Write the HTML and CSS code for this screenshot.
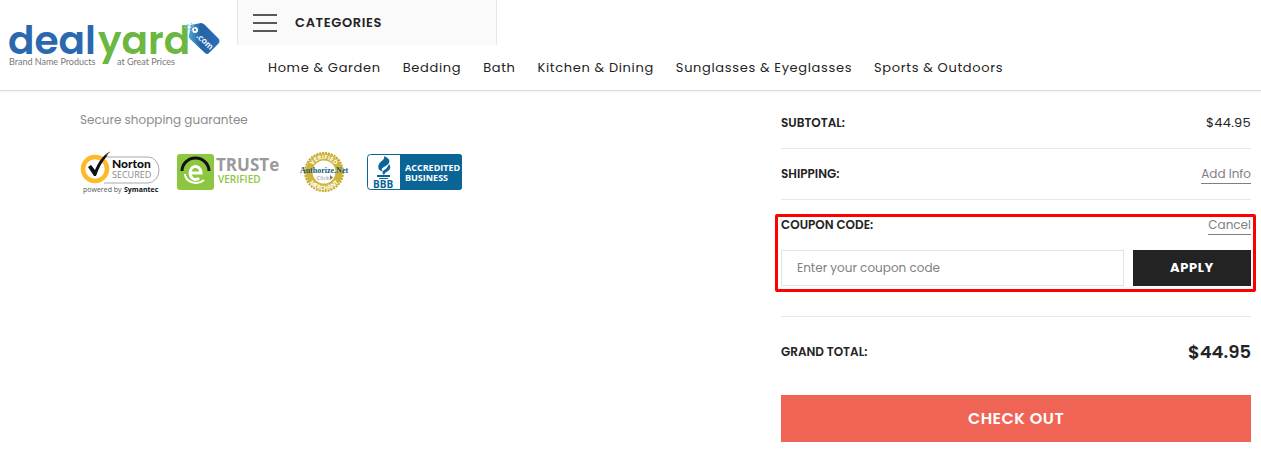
FILE: index.html
```html
<!DOCTYPE html>
<html lang="en">

<head>
    <meta charset="UTF-8" />
    <meta name="viewport" content="width=device-width, initial-scale=1.0" />
    <title>Dealyard - Cart</title>
    <link rel="stylesheet" href="styles.css">
</head>

<body>

    <header class="header">
        <a href="#" class="logo" aria-label="Dealyard home">
            <svg width="222" height="60" viewBox="0 0 222 60">
                <g font-family="Poppins, Lato, sans-serif" font-size="39" font-weight="600">
                    <text x="8" y="43" fill="#2a69b0">deal</text>
                    <text x="98" y="43" fill="#6bb742">yard</text>
                </g>
                <g font-family="Lato, sans-serif" font-size="9" fill="#777">
                    <text x="9" y="54">Brand Name Products</text>
                    <text x="117" y="54">at Great Prices</text>
                </g>
                <defs>
                    <linearGradient id="tag" x1="0" x2="1">
                        <stop offset="0" stop-color="#4aa3cf" />
                        <stop offset=".4" stop-color="#2463a5" />
                        <stop offset="1" stop-color="#2b6ebd" />
                    </linearGradient>
                </defs>
                <path d="M191 14l10-2q2 0 4 2l14 14q1 2 0 4l-10 10q-2 2-4 0l-15-14q-2-2-1-4z" fill="url(#tag)" />
                <circle cx="195" cy="19" r="3" fill="#fff" />
                <circle cx="195" cy="19" r="1" fill="#2463a5" />
                <path d="M195 18l-4-6M193 20l-9-4M192 17q-3-5-7-2" fill="none" stroke="#7cc4e3" stroke-width="1" />
                <text x="196" y="26" transform="rotate(43 196 26)" font-family="Lato, sans-serif" font-size="9" font-weight="700" fill="#fff">.com</text>
            </svg>
        </a>
        <div class="header-main">
            <button class="categories" type="button">
                <svg width="24" height="18" viewBox="0 0 24 18" stroke="#232323" stroke-width="1.6">
                    <path d="M0 1h24M0 9h24M0 17h24" />
                </svg>
                Categories
            </button>
            <nav class="menu">
                <a href="#">Home &amp; Garden</a>
                <a href="#">Bedding</a>
                <a href="#">Bath</a>
                <a href="#">Kitchen &amp; Dining</a>
                <a href="#">Sunglasses &amp; Eyeglasses</a>
                <a href="#">Sports &amp; Outdoors</a>
            </nav>
        </div>
    </header>

    <main class="cart">
        <section class="secure">
            <p>Secure shopping guarantee</p>
            <div class="badges">
                <!-- Norton -->
                <svg width="80" height="44" viewBox="0 0 80 44">
                    <path d="M24 6h44a11 13 0 0 1 0 26H24" fill="#fff" stroke="#aaa" />
                    <circle cx="15" cy="18" r="12" fill="#fff" stroke="#fdb927" stroke-width="4.5" />
                    <path d="M8 16l3-2 4 5q4-10 11-16l3-2-2 4q-7 8-11 20h-2z" fill="#111" />
                    <path d="M26 4l2-1M28 2l2-1" stroke="#a08040" />
                    <text x="32" y="17" font-family="Lato, sans-serif" font-size="12" font-weight="900" fill="#111">Norton</text>
                    <g font-family="'Open Sans', sans-serif">
                        <text x="32" y="27" font-size="9" fill="#888">SECURED</text>
                        <text x="3" y="41" font-size="7" fill="#555">powered by</text>
                        <text x="44" y="41" font-size="7" font-weight="700" fill="#111">Symantec</text>
                    </g>
                </svg>
                <!-- TRUSTe -->
                <svg width="105" height="44" viewBox="0 0 105 44">
                    <rect y="3" width="37" height="36" rx="3" fill="#8dc63f" />
                    <path d="M5 20a13.500 13 0 0 1 27 0" fill="none" stroke="#111" stroke-width="3" />
                    <path d="M13 22h11a5.500 6.500 0 1 0-2 5" fill="none" stroke="#fff" stroke-width="3" />
                    <path d="M8 23a11 9 0 0 0 19 6" fill="none" stroke="#fff" stroke-width="2" />
                    <g font-family="'Open Sans', sans-serif">
                        <text x="39" y="20" font-size="17" font-weight="700" fill="#9a9a9a">TRUSTe</text>
                        <text x="41" y="32" font-size="10" font-weight="600" fill="#8dc63f">VERIFIED</text>
                    </g>
                </svg>
                <!-- Authorize.Net -->
                <svg width="51" height="44" viewBox="0 0 51 44">
                    <defs>
                        <path id="arcTop" d="M12 21a13 13 0 0 1 26 0" />
                        <path id="arcBottom" d="M7 21a18 18 0 0 0 36 0" />
                    </defs>
                    <circle cx="25" cy="21" r="19" fill="none" stroke="#c2a522" stroke-width="2" stroke-dasharray="2 1" />
                    <circle cx="25" cy="21" r="15" fill="#fff" stroke="#cfb53b" stroke-width="7" />
                    <g font-family="'Open Sans', sans-serif" font-size="6" font-weight="700" fill="#fff" text-anchor="middle">
                        <text><textPath href="#arcTop" startOffset="50%">VERIFIED</textPath></text>
                        <text><textPath href="#arcBottom" startOffset="50%">MERCHANT</textPath></text>
                    </g>
                    <text x="25" y="22" font-family="'Liberation Serif', serif" font-size="8" font-weight="700" fill="#155a7d" text-anchor="middle">Authorize.Net</text>
                    <text x="24" y="29" font-family="'Open Sans', sans-serif" font-size="6" fill="#888" text-anchor="middle">Click</text>
                    <path d="M31 24v5l3-2.500z" fill="#777" />
                </svg>
                <!-- BBB -->
                <svg width="95" height="44" viewBox="0 0 95 44">
                    <rect x=".5" y="3.500" width="94" height="35" rx="3" fill="#fff" stroke="#0a6496" />
                    <path d="M33 3h59q3 0 3 3v30q0 3-3 3H33z" fill="#0a6496" />
                    <path d="M17 5q7 3 5 7-1 2-5 4-4 2-1 5-7-3-4-8 1-2 4-4 2-2 1-4z" fill="#0a6496" />
                    <path d="M22 13q3 4-1 7-3 1-4 4-3-2 0-5 3-1 5-6z" fill="#0a6496" />
                    <path d="M10 24h13v2H10zM12 27h9v1h-9z" fill="#0a6496" />
                    <g font-family="'Open Sans', sans-serif" font-weight="700">
                        <text x="6" y="37" font-size="10" fill="#0a6496">BBB</text>
                        <text x="38" y="20" font-size="9" fill="#fff">ACCREDITED</text>
                        <text x="38" y="30" font-size="9" fill="#fff">BUSINESS</text>
                    </g>
                </svg>
            </div>
        </section>

        <section class="summary">
            <div class="row">
                <span class="label">Subtotal:</span>
                <span class="price">$44.95</span>
            </div>
            <div class="row">
                <span class="label">Shipping:</span>
                <a href="#" class="action">Add Info</a>
            </div>
            <form class="coupon">
                <div class="coupon-box">
                    <div class="coupon-head">
                        <label class="label" for="coupon">Coupon Code:</label>
                        <a href="#" class="action">Cancel</a>
                    </div>
                    <div class="coupon-fields">
                        <input type="text" id="coupon" placeholder="Enter your coupon code" />
                        <button type="button">Apply</button>
                    </div>
                </div>
            </form>
            <div class="row total">
                <span class="label">Grand total:</span>
                <span class="grand">$44.95</span>
            </div>
            <button class="checkout" type="button">Check out</button>
        </section>
    </main>

</body>

</html>
```
FILE: styles.css
```css
* {
    box-sizing: border-box;
    margin: 0;
    padding: 0;
}

body {
    font-family: Poppins, Inter, sans-serif;
    font-size: 13px;
    line-height: 22px;
    color: #232323;
    background: #fff;
}

button,
input {
    font-family: inherit;
}

a {
    color: inherit;
    text-decoration: none;
}

.header {
    display: flex;
    border-bottom: 1px solid #ddd;
    box-shadow: 0 1px 1px rgba(0, 0, 0, 0.05);
}

.logo {
    flex: 0 0 237px;
    padding-top: 11px;
}

.logo svg,
.badges svg {
    display: block;
}

.categories {
    display: flex;
    align-items: center;
    gap: 18px;
    width: 260px;
    height: 45px;
    padding: 0 15px;
    border: solid #e8e8e8;
    border-width: 0 1px;
    background: #fafafa;
    color: #232323;
    font-size: 13px;
    font-weight: 600;
    letter-spacing: 0.05em;
    text-transform: uppercase;
    cursor: pointer;
}

.menu {
    display: flex;
    flex-wrap: wrap;
    gap: 22px;
    padding: 12px 31px 11px;
    letter-spacing: 0.05em;
}

.menu a:hover {
    text-decoration: underline;
}

.cart {
    display: flex;
    justify-content: space-between;
    gap: 40px;
    padding: 21px 10px 10px 80px;
}

.secure {
    color: #8c8c8c;
    font-size: 12px;
    line-height: 16px;
}

.badges {
    display: flex;
    gap: 17px;
    margin-top: 23px;
}

.summary {
    flex: 0 1 470px;
}

.row,
.coupon-head {
    display: flex;
    justify-content: space-between;
    align-items: center;
}

.row {
    padding-bottom: 14px;
    margin-bottom: 14px;
    border-bottom: 1px solid #e8e8e8;
}

.label {
    font-size: 12px;
    font-weight: 600;
    text-transform: uppercase;
}

.price {
    letter-spacing: 0.02em;
}

.action {
    color: #808080;
    font-size: 12px;
    line-height: 18px;
    border-bottom: 1px solid #808080;
}

.coupon {
    padding-bottom: 30px;
    border-bottom: 1px solid #e8e8e8;
}

.coupon-box {
    position: relative;
}

/* highlight frame around the coupon fields */
.coupon-box::after {
    content: "";
    position: absolute;
    inset: 0 -5px -6px -6px;
    border: 3px solid #f00;
    border-radius: 2px;
    pointer-events: none;
}

.coupon-fields {
    display: flex;
    gap: 9px;
    margin-top: 14px;
}

.coupon-fields input {
    flex: 1;
    min-width: 0;
    height: 36px;
    padding: 0 15px;
    border: 1px solid #e2e2e6;
    font-size: 12px;
}

.coupon-fields input::placeholder {
    color: #808080;
}

.coupon-fields button {
    width: 118px;
    height: 36px;
    border: none;
    background: #232323;
    color: #fff;
    font-size: 13px;
    font-weight: 700;
    letter-spacing: 0.05em;
    text-transform: uppercase;
    cursor: pointer;
}

.total {
    padding: 24px 0 0;
    margin-bottom: 32px;
    border: none;
}

.grand {
    font-size: 18px;
    font-weight: 600;
}

.checkout {
    display: block;
    width: 100%;
    height: 47px;
    border: none;
    background: #f06456;
    color: #fff;
    font-size: 16px;
    font-weight: 600;
    letter-spacing: 0.03em;
    text-transform: uppercase;
    cursor: pointer;
}
```
